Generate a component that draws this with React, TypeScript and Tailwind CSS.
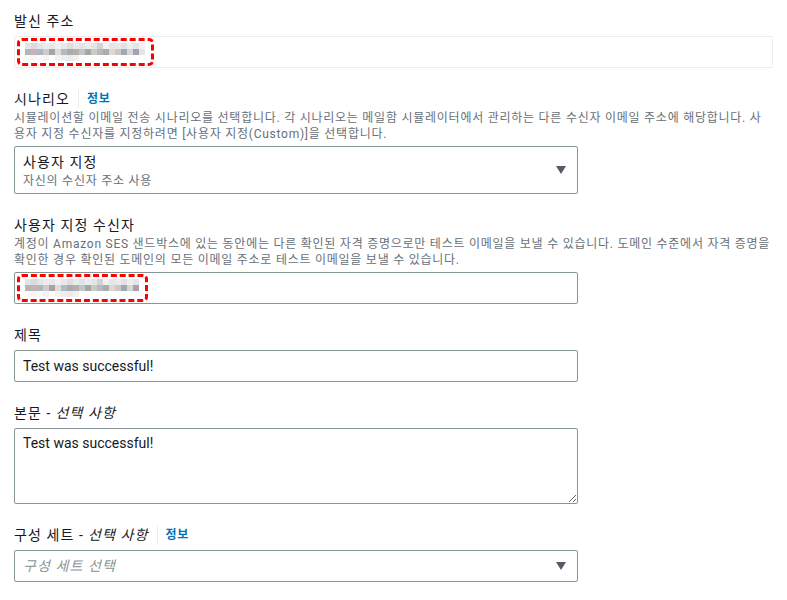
import { ReactNode } from 'react';

const row1 = [
  'bg-[#e4e4e6]', 'bg-[#ddd8da]', 'bg-[#e2e5ea]', 'bg-[#ececec]', 'bg-[#e8e6e8]', 'bg-[#f0f0f0]',
  'bg-[#e6e8ea]', 'bg-[#dedede]', 'bg-[#e9eaec]', 'bg-[#e1e4e6]', 'bg-[#ececec]', 'bg-[#e4e6e6]',
  'bg-[#d2d2d2]', 'bg-[#f2f2f2]', 'bg-[#e6e6e8]', 'bg-[#eaeaea]', 'bg-[#e2e3e6]', 'bg-[#eeeeee]',
  'bg-[#e6e4e8]', 'bg-[#f2f2f2]',
];
const row2 = [
  'bg-[#b5b5b8]', 'bg-[#c4b4b8]', 'bg-[#b0b7c2]', 'bg-[#cfcbcd]', 'bg-[#a8a2a8]', 'bg-[#dcdcdc]',
  'bg-[#b2bac2]', 'bg-[#a9abae]', 'bg-[#b4b0ae]', 'bg-[#bfc6ca]', 'bg-[#a6a6a2]', 'bg-[#c8cbc5]',
  'bg-[#b8b8c0]', 'bg-[#a9adb0]', 'bg-[#dfd8d0]', 'bg-[#c8cac8]', 'bg-[#9fa9b4]', 'bg-[#d6d6d6]',
  'bg-[#a8a0b0]', 'bg-[#e4e4e4]',
];
const row3 = [
  'bg-[#fafafa]', 'bg-[#f6f6f6]', 'bg-[#fafafa]', 'bg-[#f4f4f4]', 'bg-[#ffffff]', 'bg-[#f4f2f0]',
  'bg-[#eeeeee]', 'bg-[#eceaec]', 'bg-[#f2f2f2]', 'bg-[#ffffff]',
];

const Mosaic = ({ cols }: { cols: number }) => (
  <div className="flex flex-col">
    {[row1, row2, row3].map((r, i) => (
      <div key={i} className="flex h-[6px]">
        {r.slice(0, cols).map((c, j) => (
          <div key={j} className={`w-[6px] h-[6px] ${c}`} />
        ))}
      </div>
    ))}
  </div>
);

const Redacted = ({ w, cols }: { w: string; cols: number }) => (
  <div
    className={`${w} h-[28px] border-[3px] border-dashed border-[#ff0000] rounded-[5px] flex items-center pl-[5px]`}
  >
    <Mosaic cols={cols} />
  </div>
);

const Info = () => (
  <>
    <span className="mx-2 w-px h-[18px] bg-[#eaeded]" />
    <span className="text-[12px] font-bold tracking-[0.8px] text-[#0073bb]">정보</span>
  </>
);

const Label = ({ children }: { children: ReactNode }) => (
  <div className="flex items-center text-[14px] leading-[22px] tracking-[1.1px] text-[#16191f]">{children}</div>
);

const Desc = ({ children }: { children: ReactNode }) => (
  <div className="text-[12px] leading-[16px] tracking-[0.75px] text-[#687078] whitespace-nowrap">{children}</div>
);

const Arrow = () => (
  <svg width="10" height="8" viewBox="0 0 10 8">
    <polygon points="0,0 10,0 5,8" fill="#545b64" />
  </svg>
);

export default function App() {
  return (
    <div className="min-h-[600px] bg-white px-[14px] pt-[10px] font-['Roboto','Noto_Sans_CJK_KR',sans-serif] text-[#16191f]">
      <div className="flex flex-col gap-1">
        <Label>발신 주소</Label>
        <div className="h-[32px] w-[759px] border border-[#eaeded] rounded-[2px] bg-white flex items-center pl-[2px]">
          <Redacted w="w-[137px]" cols={20} />
        </div>
      </div>

      <div className="flex flex-col gap-1 mt-5">
        <div>
          <Label>
            시나리오
            <Info />
          </Label>
          <Desc>
            시뮬레이션할 이메일 전송 시나리오를 선택합니다. 각 시나리오는 메일함 시뮬레이터에서 관리하는 다른 수신자 이메일 주소에 해당합니다. 사
            <br />
            용자 지정 수신자를 지정하려면 [사용자 지정(Custom)]을 선택합니다.
          </Desc>
        </div>
        <div className="h-[48px] w-[564px] border border-[#879596] rounded-[2px] flex items-center justify-between pl-2 pr-[11px]">
          <div>
            <div className="text-[14px] leading-[22px] tracking-[1.1px]">사용자 지정</div>
            <div className="text-[12px] leading-[16px] tracking-[0.75px] text-[#687078]">자신의 수신자 주소 사용</div>
          </div>
          <Arrow />
        </div>
      </div>

      <div className="flex flex-col gap-1 mt-5">
        <div>
          <Label>사용자 지정 수신자</Label>
          <Desc>
            계정이 Amazon SES 샌드박스에 있는 동안에는 다른 확인된 자격 증명으로만 테스트 이메일을 보낼 수 있습니다. 도메인 수준에서 자격 증명을
            <br />
            확인한 경우 확인된 도메인의 모든 이메일 주소로 테스트 이메일을 보낼 수 있습니다.
          </Desc>
        </div>
        <div className="h-[32px] w-[564px] border border-[#879596] rounded-[2px] flex items-center pl-[2px]">
          <Redacted w="w-[131px]" cols={19} />
        </div>
      </div>

      <div className="flex flex-col gap-1 mt-5">
        <Label>제목</Label>
        <input
          readOnly
          value="Test was successful!"
          className="h-[32px] w-[564px] border border-[#879596] rounded-[2px] px-2 text-[14px] text-[#16191f] outline-none"
        />
      </div>

      <div className="flex flex-col gap-1 mt-5">
        <Label>
          본문 - <span className="italic ml-1">선택 사항</span>
        </Label>
        <textarea
          readOnly
          value="Test was successful!"
          className="block h-[76px] w-[564px] border border-[#879596] rounded-[2px] px-2 py-[3px] text-[14px] leading-[22px] text-[#16191f] outline-none"
        />
      </div>

      <div className="flex flex-col gap-1 mt-5">
        <Label>
          구성 세트 - <span className="italic ml-1">선택 사항</span>
          <Info />
        </Label>
        <div className="h-[32px] w-[564px] border border-[#879596] rounded-[2px] flex items-center justify-between pl-2 pr-[11px]">
          <span className="text-[14px] italic tracking-[1.1px] text-[#879596]">구성 세트 선택</span>
          <Arrow />
        </div>
      </div>
    </div>
  );
}
